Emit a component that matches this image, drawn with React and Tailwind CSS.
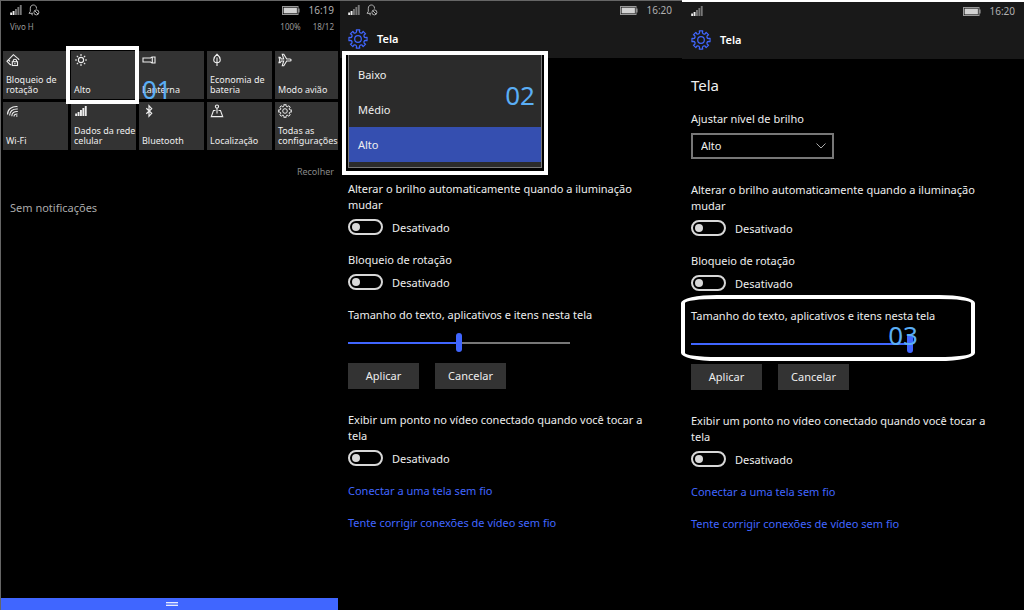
import React, { useState } from "react";

const GEAR_PATH =
  Array.from({ length: 8 }, (_, i) => {
    const point = (deg, r) => {
      const a = ((i * 45 + deg) * Math.PI) / 180;
      return `${(10 + r * Math.sin(a)).toFixed(2)} ${(10 - r * Math.cos(a)).toFixed(2)}`;
    };
    return `${i === 0 ? "M" : "L"}${point(-11, 7.4)} L${point(-11, 9.2)} L${point(11, 9.2)} L${point(11, 7.4)} Q${point(22.5, 5.8)} ${point(34, 7.4)}`;
  }).join(" ") + " Z";

function GearIcon({ className, strokeWidth = 1.2 }) {
  return (
    <svg viewBox="0 0 20 20" className={className} fill="none" stroke="currentColor" strokeWidth={strokeWidth} strokeLinejoin="round" aria-hidden="true">
      <path d={GEAR_PATH} />
      <circle cx="10" cy="10" r="3.3" />
    </svg>
  );
}

function SignalIcon({ lit = 2, className = "h-3 w-3" }) {
  return (
    <svg viewBox="0 0 12 12" className={className} fill="currentColor" aria-hidden="true">
      {[2.5, 4, 6, 8, 10].map((h, i) => (
        <rect key={h} x={0.2 + i * 2.4} y={11 - h} width="1.9" height={h} fill={i < lit ? "#eee" : "#777"} />
      ))}
    </svg>
  );
}

function QuietIcon() {
  return (
    <svg viewBox="0 0 12 12" className="h-3 w-3" fill="none" stroke="currentColor" strokeWidth="1" aria-hidden="true">
      <path d="M5 9.3H1L2.3 7.4V4.2C2.3 2.2 3.7 1 5.4 1S8.5 2.2 8.5 4.2V4.7M3.2 9.4C3.4 10.5 4 10.9 5 10.9" />
      <circle cx="8.4" cy="8.4" r="2.5" />
      <path d="M6.8 6.8L10 10" />
    </svg>
  );
}

function BatteryIcon() {
  return (
    <svg viewBox="0 0 18 9" className="h-[9px] w-[18px]" aria-hidden="true">
      <rect x="0.5" y="0.5" width="15.5" height="8" fill="none" stroke="#999" />
      <rect x="1.6" y="1.6" width="13.3" height="5.8" fill="#d2d2d2" />
      <rect x="16.3" y="2.5" width="1.2" height="4" fill="#a8a8a8" />
    </svg>
  );
}

function TileIcon({ children }) {
  return (
    <svg viewBox="0 0 14 14" className="h-3.5 w-3.5" fill="none" stroke="currentColor" strokeWidth="1.1" aria-hidden="true">
      {children}
    </svg>
  );
}

const tiles = [
  {
    lines: ["Bloqueio de", "rotação"],
    icon: (
      <TileIcon>
        <path d="M5.2 11.6H4.3L1 8.3L7.4 1.7L12.7 6.2V7M4 8.5L2.6 7" />
        <rect x="6.3" y="8.7" width="5.2" height="3.8" />
        <path d="M7.3 8.7V7.6C7.3 5.8 10.5 5.8 10.5 7.6V8.7M8.9 10V11.2" />
      </TileIcon>
    ),
  },
  {
    lines: ["Alto"],
    marked: true,
    icon: (
      <TileIcon>
        <circle cx="7" cy="7" r="2.6" />
        <path d="M7 1V3M7 11V13M1 7H3M11 7H13M2.8 2.8L4.1 4.1M9.9 9.9L11.2 11.2M2.8 11.2L4.1 9.9M9.9 4.1L11.2 2.8" />
      </TileIcon>
    ),
  },
  {
    lines: ["Lanterna"],
    icon: (
      <TileIcon>
        <path d="M1 5H8.5L10 4H13V10H10L8.5 9H1ZM10.3 4V10" />
      </TileIcon>
    ),
  },
  {
    lines: ["Economia de", "bateria"],
    icon: (
      <TileIcon>
        <path d="M7 13V4.5M7 9.8C2.5 9.8 2.8 4.6 7 1.2C11.2 4.6 11.5 9.8 7 9.8Z" />
      </TileIcon>
    ),
  },
  {
    lines: ["Modo avião"],
    icon: (
      <TileIcon>
        <path d="M12 6H8.7L5.8 1.3H4.3L5.7 6H3.4L2.2 4.4H1L1.8 7L1 9.6H2.2L3.4 8H5.7L4.3 12.7H5.8L8.7 8H12C13.5 8 13.5 6 12 6Z" />
      </TileIcon>
    ),
  },
  {
    lines: ["Wi-Fi"],
    icon: (
      <TileIcon>
        <path d="M1.5 10.5C1.5 5.5 5.5 2.2 11.5 2.6M3.6 11.6C3.6 7.3 6.8 4.6 11.8 5M5.8 12.2C5.8 9 8 7.2 11.8 7.5M8 12.5C8 10.8 9.4 9.9 11.5 10" />
        <circle cx="10.8" cy="12" r="0.8" fill="currentColor" stroke="none" />
      </TileIcon>
    ),
  },
  { lines: ["Dados da rede", "celular"], icon: <SignalIcon lit={5} className="mx-px h-3.5 w-3" /> },
  {
    lines: ["Bluetooth"],
    icon: (
      <TileIcon>
        <path d="M4.3 4.3L9.7 9.4L7 12.3V1.7L9.7 4.6L4.3 9.7" strokeWidth="1.2" />
      </TileIcon>
    ),
  },
  {
    lines: ["Localização"],
    icon: (
      <TileIcon>
        <circle cx="7" cy="2.6" r="1.6" />
        <path d="M7 4.2V9.5M5.5 6.5H3.5L1.3 12.6H12.7L10.5 6.5H8.5" />
      </TileIcon>
    ),
  },
  { lines: ["Todas as", "configurações"], icon: <GearIcon className="h-3.5 w-3.5" strokeWidth={1.4} /> },
];

function StatusBar({ time, quiet = true }) {
  return (
    <div className="flex h-4 items-center justify-between text-[#b0b0b0]">
      <div className="flex gap-1.5">
        <SignalIcon />
        {quiet && <QuietIcon />}
      </div>
      <div className="flex items-center gap-2">
        <BatteryIcon />
        <span className="text-[10px] leading-4">{time}</span>
      </div>
    </div>
  );
}

function ActionCenter() {
  return (
    <section className="flex flex-col border-t border-l border-[#666]">
      <div className="pt-px pr-[6px] pl-[9px]">
        <StatusBar time="16:19" />
        <div className="mt-px flex justify-between text-[8px] leading-4 text-[#999]">
          <span>Vivo H</span>
          <span className="flex gap-3">
            <span>100%</span>
            <span>18/12</span>
          </span>
        </div>
      </div>
      <div className="mt-4 mr-0.5 ml-0.5 grid grid-cols-[repeat(4,65fr)_63fr] gap-[3px]">
        {tiles.map((tile) => (
          <button key={tile.lines[0]} type="button" className="relative flex h-12 min-w-0 flex-col justify-between bg-[#333] px-[3px] pt-0.5 pb-1 text-left text-[9px] leading-[10px] whitespace-nowrap text-[#eee]">
            {tile.icon}
            <span>
              {tile.lines.map((line) => (
                <span key={line} className="block">{line}</span>
              ))}
            </span>
            {tile.marked && (
              <span className="absolute -inset-y-[5px] -right-[3px] -left-[5px] z-10 border-4 border-white">
                <span className="absolute top-[23px] left-[72px] text-[26px] leading-8 text-[#5aaef5]">01</span>
              </span>
            )}
          </button>
        ))}
      </div>
      <button type="button" className="mt-3.5 mr-[6px] self-end text-[9px] leading-4 text-[#888]">Recolher</button>
      <p className="mt-5 ml-[9px] text-[#aaa]">Sem notificações</p>
      <div className="mt-auto mr-0.5 flex h-3 items-center justify-center bg-[#4066ff] pl-1">
        <span className="h-1 w-3 border-y border-white/80 bg-white/30" />
      </div>
    </section>
  );
}

function Header({ time, quiet, className }) {
  return (
    <header className={`h-[57px] bg-[#191919] ${className}`}>
      <StatusBar time={time} quiet={quiet} />
      <div className="mt-[11px] flex items-center gap-[9px]">
        <GearIcon className="h-5 w-5 text-[#4066ff]" strokeWidth={1.2} />
        <h1 className="font-semibold text-white">Tela</h1>
      </div>
    </header>
  );
}

function Toggle({ label }) {
  return (
    <div>
      <p className="max-w-[310px]">{label}</p>
      <label className="mt-1.5 flex h-4 items-center gap-[9px]">
        <input
          type="checkbox"
          role="switch"
          aria-label={label}
          className="flex h-4 w-[35px] appearance-none items-center rounded-full border-2 border-[#d8d8d8] px-0.5 before:h-2 before:w-2 before:rounded-full before:bg-[#d8d8d8] checked:justify-end checked:bg-[#4066ff]"
        />
        <span className="pt-0.5">Desativado</span>
      </label>
    </div>
  );
}

function SizeSlider({ id, initial, marked }) {
  const [value, setValue] = useState(initial);
  return (
    <div className="relative">
      <label htmlFor={id} className="block">Tamanho do texto, aplicativos e itens nesta tela</label>
      <input
        id={id}
        type="range"
        value={value}
        onChange={(e) => setValue(Number(e.target.value))}
        className="mt-2.5 block h-[19px] w-[222px] appearance-none bg-[length:100%_2px] bg-center bg-no-repeat [&::-webkit-slider-thumb]:h-[19px] [&::-webkit-slider-thumb]:w-1.5 [&::-webkit-slider-thumb]:appearance-none [&::-webkit-slider-thumb]:rounded-full [&::-webkit-slider-thumb]:bg-[#4066ff]"
        style={{ backgroundImage: `linear-gradient(to right, #4066ff ${value}%, #777 ${value}%)` }}
      />
      {marked && (
        <div className="pointer-events-none absolute -top-[13px] -bottom-2 -left-2.5 w-[294px] rounded-[36px/8px] border-4 border-white">
          <span className="absolute top-5 right-[53px] text-[26px] leading-8 text-[#5aaef5]">03</span>
        </div>
      )}
    </div>
  );
}

function Settings({ id, size, marked }) {
  return (
    <div className="flex flex-col gap-[17px]">
      <Toggle label="Alterar o brilho automaticamente quando a iluminação mudar" />
      <Toggle label="Bloqueio de rotação" />
      <div>
        <SizeSlider id={id} initial={size} marked={marked} />
        <div className="mt-[11px] flex gap-4">
          <button type="button" className="h-[26px] w-[71px] bg-[#333]">Aplicar</button>
          <button type="button" className="h-[26px] w-[71px] bg-[#333]">Cancelar</button>
        </div>
      </div>
      <div className="mt-1.5">
        <Toggle label="Exibir um ponto no vídeo conectado quando você tocar a tela" />
      </div>
      <div className="flex flex-col gap-4 text-[#4066ff]">
        <a href="#conectar">Conectar a uma tela sem fio</a>
        <a href="#corrigir">Tente corrigir conexões de vídeo sem fio</a>
      </div>
    </div>
  );
}

function BrightnessMenu() {
  const [selected, setSelected] = useState("Alto");
  return (
    <div className="relative -mt-[7px] ml-0.5 w-[206px] border-4 border-white bg-black px-0.5 pb-[3px]">
      <div role="listbox" aria-label="Brilho" className="border-x border-b border-[#777] bg-[#2b2b2b] pt-0.5 pb-[5px]">
        {["Baixo", "Médio", "Alto"].map((level) => (
          <button
            key={level}
            type="button"
            role="option"
            aria-selected={level === selected}
            onClick={() => setSelected(level)}
            className={`block h-[35px] w-full px-[9px] text-left ${level === selected ? "bg-[#354fb0]" : ""}`}
          >
            {level}
          </button>
        ))}
      </div>
      <span className="pointer-events-none absolute top-6 right-[9px] text-[26px] leading-8 text-[#5aaef5]">02</span>
    </div>
  );
}

function App() {
  return (
    <main className="grid min-h-screen grid-cols-[340fr_342fr_342fr] bg-black font-['Noto_Sans',sans-serif] text-[11px] leading-4 text-[#eee]">
      <ActionCenter />

      <section className="border-t border-[#666]">
        <Header time="16:20" className="pt-px pr-2.5 pl-2" />
        <BrightnessMenu />
        <div className="mt-1.5 pr-2.5 pl-2">
          <Settings id="size-middle" size={50} />
        </div>
      </section>

      <section className="border-t-2 border-white">
        <Header time="16:20" quiet={false} className="pt-px pr-[9px] pl-[9px]" />
        <div className="px-[9px] pt-4">
          <h2 className="text-[15px] leading-5">Tela</h2>
          <label htmlFor="brightness" className="mt-4 block">Ajustar nível de brilho</label>
          <div className="relative mt-1.5 mb-[23px] w-[143px]">
            <select id="brightness" className="block h-[26px] w-full appearance-none border-2 border-[#777] bg-black px-2">
              <option>Alto</option>
            </select>
            <svg viewBox="0 0 10 6" className="pointer-events-none absolute top-2.5 right-2 h-1.5 w-2.5" fill="none" stroke="#aaa" aria-hidden="true">
              <path d="M0.5 0.5L5 5L9.5 0.5" />
            </svg>
          </div>
          <Settings id="size-large" size={100} marked />
        </div>
      </section>
    </main>
  );
}

export default App;
